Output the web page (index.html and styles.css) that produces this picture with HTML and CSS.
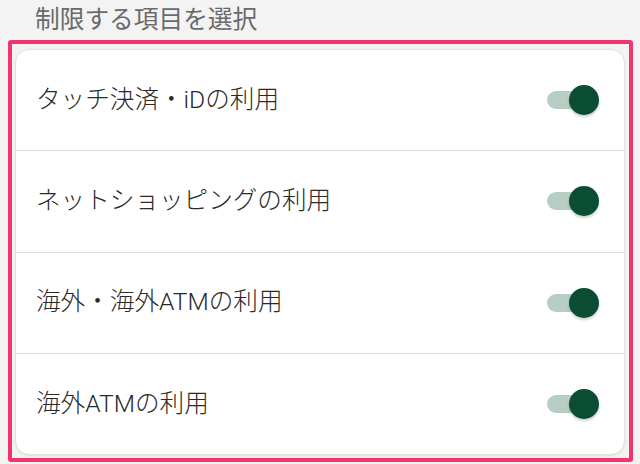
FILE: index.html
```html
<!DOCTYPE html>
<html lang="ja">
<head>
<meta charset="utf-8">
<link rel="stylesheet" href="styles.css">
</head>
<body>
<div class="page">
  <h2 class="title">制限する項目を選択</h2>
  <div class="frame">
    <div class="card">
      <div class="row"><span class="label">タッチ決済・iDの利用</span><span class="toggle"><span class="track"></span><span class="knob"></span></span></div>
      <div class="row"><span class="label">ネットショッピングの利用</span><span class="toggle"><span class="track"></span><span class="knob"></span></span></div>
      <div class="row"><span class="label">海外・海外ATMの利用</span><span class="toggle"><span class="track"></span><span class="knob"></span></span></div>
      <div class="row"><span class="label">海外ATMの利用</span><span class="toggle"><span class="track"></span><span class="knob"></span></span></div>
    </div>
  </div>
</div>
</body>
</html>
```
FILE: styles.css
```css
html, body {
  margin: 0;
  padding: 0;
  background: #f3f3f3;
  font-family: Roboto, "Noto Sans CJK JP", "Noto Sans", sans-serif;
}
.page {
  width: 640px;
  height: 464px;
  overflow: hidden;
}
.title {
  margin: 0;
  padding: 4px 0 0 35px;
  height: 36px;
  box-sizing: border-box;
  font-size: 24.7px;
  line-height: 32px;
  font-weight: 400;
  color: #6a6a6a;
}
.frame {
  margin-left: 8px;
  width: 625px;
  height: 422px;
  box-sizing: border-box;
  border: 4px solid #f2356d;
  border-radius: 3px;
  padding: 5px 4px 3px 3px;
  margin-top: 4px;
}
.card {
  background: #fff;
  border: 1px solid #e2e2e2;
  border-radius: 14px;
  height: 100%;
  box-sizing: border-box;
  display: flex;
  flex-direction: column;
  box-shadow: 0 1px 2px rgba(0,0,0,0.08);
}
.row {
  flex: 1;
  display: flex;
  align-items: center;
  justify-content: space-between;
  padding: 0 25px 0 20px;
  border-bottom: 1px solid #dcdcdc;
}
.row:last-child {
  border-bottom: none;
}
.label {
  font-size: 24.6px;
  font-weight: 300;
  color: #2a2a2a;
  line-height: 1;
}
.toggle {
  position: relative;
  width: 52px;
  height: 30px;
}
.track {
  position: absolute;
  left: 0;
  top: 6px;
  width: 44px;
  height: 18px;
  border-radius: 9px;
  background: #b8cec5;
}
.knob {
  position: absolute;
  right: 0;
  top: 0;
  width: 30px;
  height: 30px;
  border-radius: 50%;
  background: #0b4d33;
  box-shadow: 0 2px 3px rgba(0,0,0,0.2);
}
```
